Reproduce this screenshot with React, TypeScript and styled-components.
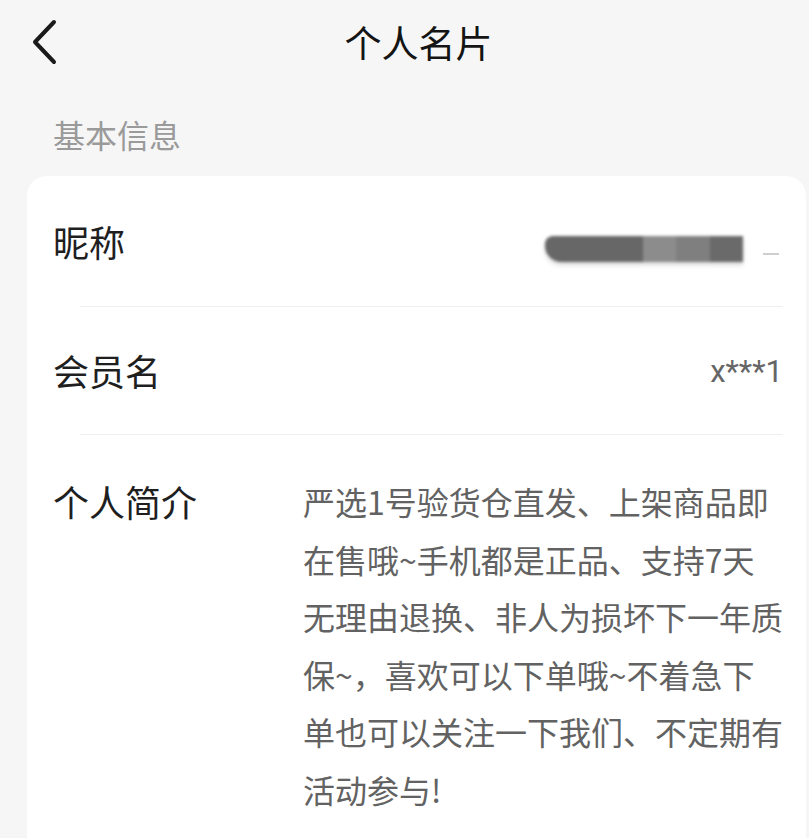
import React from 'react';
import styled, { createGlobalStyle } from 'styled-components';

const GlobalStyle = createGlobalStyle`
  html, body {
    margin: 0;
    padding: 0;
    background: #f6f6f6;
  }
  body {
    font-family: "Noto Sans CJK SC", "Noto Sans", sans-serif;
    -webkit-font-smoothing: antialiased;
  }
`;

const Page = styled.div`
  width: 809px;
  height: 838px;
  overflow: hidden;
  background: #f6f6f6;
`;

const Header = styled.header`
  display: grid;
  grid-template-columns: 1fr auto 1fr;
  align-items: center;
  height: 84px;
`;

const BackButton = styled.button`
  justify-self: start;
  display: flex;
  align-items: center;
  justify-content: center;
  margin-left: 24px;
  padding: 0;
  width: 40px;
  height: 50px;
  border: none;
  background: transparent;
  cursor: pointer;
`;

const Title = styled.h1`
  margin: 0 0 0 28px;
  font-size: 37px;
  font-weight: 400;
  color: #141414;
  line-height: 1;
`;

const SectionTitle = styled.div`
  padding: 28px 0 0 53px;
  font-size: 32px;
  line-height: 45px;
  color: #9a9a9a;
`;

const Card = styled.section`
  margin: 19px 3px 0 27px;
  background: #fff;
  border-radius: 20px 20px 0 0;
  padding: 0 23px 0 26px;
  min-height: 700px;
`;

const Row = styled.div<{ $height?: number; $divider?: boolean }>`
  position: relative;
  display: flex;
  align-items: center;
  justify-content: space-between;
  height: ${p => p.$height ?? 129}px;

  &::after {
    content: '';
    display: ${p => (p.$divider ? 'block' : 'none')};
    position: absolute;
    left: 27px;
    right: 0;
    bottom: 0;
    height: 1px;
    background: #efefef;
  }
`;

const Label = styled.div`
  font-size: 36px;
  line-height: 57.6px;
  color: #1f1f1f;
  flex: none;
`;

const Value = styled.div`
  font-family: Roboto, "Noto Sans CJK SC", sans-serif;
  font-size: 31px;
  color: #666;
`;

const Mosaic = styled.div`
  display: flex;
  align-items: flex-start;
  margin-top: 14px;
  margin-right: 4px;
`;

const MosaicBar = styled.div`
  display: flex;
  height: 26px;
  border-radius: 8px 0 0 16px;
  overflow: hidden;
  filter: blur(1.6px);
  box-shadow: 0 3px 4px rgba(0, 0, 0, 0.15);
`;

const Block = styled.div<{ $w: number; $c: string }>`
  width: ${p => p.$w}px;
  background: ${p => p.$c};
`;

const Dash = styled.div`
  width: 16px;
  height: 2px;
  margin: 17px 0 0 20px;
  background: #cfcfcf;
  filter: blur(0.5px);
`;

const BioRow = styled.div`
  display: flex;
  padding-top: 38px;
`;

const BioLabel = styled(Label)`
  width: 250px;
`;

const Bio = styled.div`
  font-size: 32px;
  line-height: 57.6px;
  color: #626262;
  white-space: nowrap;
`;

const BioLine = styled.div``;

const bioLines = [
  '严选1号验货仓直发、上架商品即',
  '在售哦~手机都是正品、支持7天',
  '无理由退换、非人为损坏下一年质',
  '保~，喜欢可以下单哦~不着急下',
  '单也可以关注一下我们、不定期有',
  '活动参与!',
];

const mosaicBlocks = [
  { w: 98, c: '#676767' },
  { w: 33, c: '#8c8c8c' },
  { w: 34, c: '#7f7f7f' },
  { w: 33, c: '#6a6a6a' },
];

const App: React.FC = () => {
  return (
    <Page>
      <GlobalStyle />
      <Header>
        <BackButton aria-label="返回">
          <svg width="30" height="46" viewBox="0 0 30 46" fill="none">
            <path
              d="M25 3 L6 23 L25 43"
              stroke="#1a1a1a"
              strokeWidth="4"
              strokeLinecap="round"
              strokeLinejoin="round"
            />
          </svg>
        </BackButton>
        <Title>个人名片</Title>
        <div />
      </Header>

      <SectionTitle>基本信息</SectionTitle>

      <Card>
        <Row $height={131} $divider>
          <Label>昵称</Label>
          <Mosaic>
            <MosaicBar>
              {mosaicBlocks.map((b, i) => (
                <Block key={i} $w={b.w} $c={b.c} />
              ))}
            </MosaicBar>
            <Dash />
          </Mosaic>
        </Row>

        <Row $height={128} $divider>
          <Label>会员名</Label>
          <Value>x***1</Value>
        </Row>

        <BioRow>
          <BioLabel>个人简介</BioLabel>
          <Bio>
            {bioLines.map((line, i) => (
              <BioLine key={i}>{line}</BioLine>
            ))}
          </Bio>
        </BioRow>
      </Card>
    </Page>
  );
};

export default App;
